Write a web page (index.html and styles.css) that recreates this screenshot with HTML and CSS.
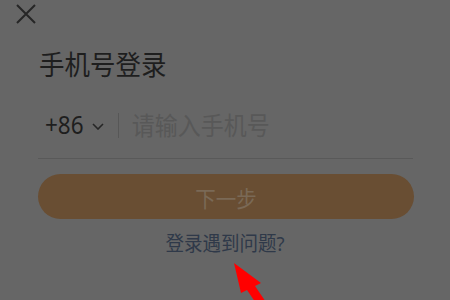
FILE: index.html
```html
<!DOCTYPE html>
<html lang="zh">
<head>
<meta charset="utf-8">
<link rel="stylesheet" href="styles.css">
</head>
<body>
<div class="page">
  <div class="close-row">
    <svg class="close" width="20" height="20" viewBox="0 0 20 20"><path d="M1 1 L19 19 M19 1 L1 19" stroke="#262626" stroke-width="2" fill="none"/></svg>
  </div>
  <div class="title"><span class="tall">手机号登录</span></div>
  <div class="phone-row">
    <span class="code">+86</span>
    <svg class="chev" width="12" height="7" viewBox="0 0 12 7"><path d="M1 1 L6 6 L11 1" stroke="#262626" stroke-width="1.6" fill="none"/></svg>
    <span class="divider"></span>
    <span class="placeholder">请输入手机号</span>
  </div>
  <div class="btn"><span class="tall">下一步</span></div>
  <div class="link"><span class="tall">登录遇到问题?</span></div>
  <svg class="arrow" width="450" height="300" viewBox="0 0 450 300"><polygon points="234,263 261,283 255,286 266.3,302.6 258.3,306.6 247,290 241,293" fill="#ff0000"/></svg>
</div>
</body>
</html>
```
FILE: styles.css
```css
html, body {
  margin: 0;
  padding: 0;
  background: #666666;
}
.page {
  position: relative;
  width: 450px;
  height: 300px;
  overflow: hidden;
  font-family: "Noto Sans", "Noto Sans CJK SC", sans-serif;
}
.tall {
  display: inline-block;
  transform: scaleY(1.08);
}
.close-row {
  display: flex;
  padding: 4px 0 0 16px;
  height: 20px;
}
.title {
  margin-top: 27px;
  padding-left: 39px;
  font-size: 25.5px;
  line-height: 26px;
  color: #1e1e1e;
}
.phone-row {
  display: flex;
  align-items: center;
  margin: 35px 37px 0 38px;
  padding: 0 0 20px 7px;
  height: 26px;
  border-bottom: 1px solid #595959;
}
.code {
  display: inline-block;
  font-size: 22.5px;
  line-height: 26px;
  color: #1e1e1e;
  transform: scaleY(1.17);
}
.chev {
  margin-left: 8px;
  margin-top: 2px;
}
.divider {
  width: 1px;
  height: 25px;
  background: #575757;
  margin-left: 14px;
}
.placeholder {
  display: inline-block;
  margin-left: 13px;
  font-size: 23px;
  line-height: 26px;
  color: #585858;
  transform: scaleY(1.08);
}
.btn {
  margin: 15px 36px 0 38px;
  height: 45px;
  border-radius: 23px;
  background: #694e33;
  color: #7a6956;
  font-size: 20.5px;
  display: flex;
  align-items: center;
  justify-content: center;
}
.link {
  margin-top: 14px;
  text-align: center;
  font-size: 18.5px;
  line-height: 20px;
  color: #2f3949;
}
.arrow {
  position: absolute;
  left: 0;
  top: 0;
}
```
